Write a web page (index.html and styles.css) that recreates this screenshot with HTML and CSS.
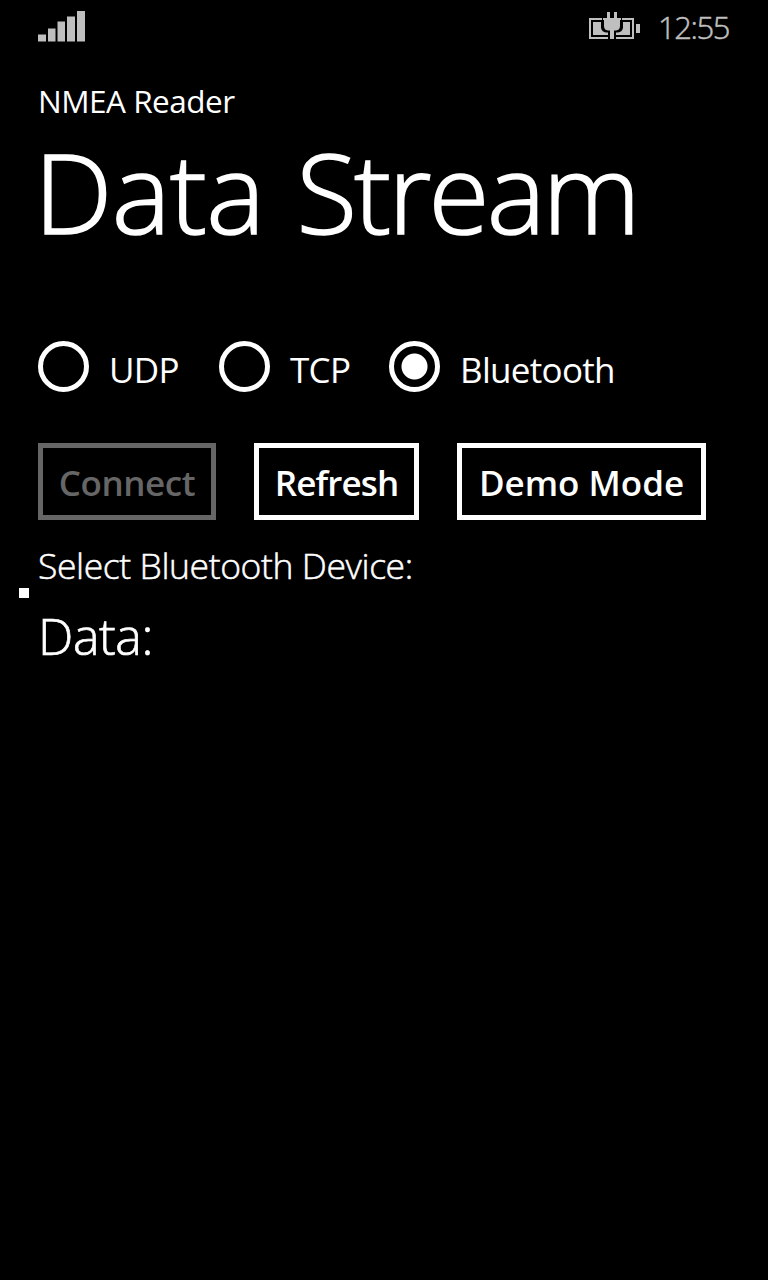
FILE: index.html
```html
<!DOCTYPE html>
<html lang="en">
<head>
<meta charset="utf-8">
<title>NMEA Reader</title>
<link rel="stylesheet" href="styles.css">
</head>
<body>
<header class="status">
  <svg class="signal" width="48" height="32" viewBox="0 0 48 32" fill="#bfbfbf"><path d="M0 23.500h8V30.500H0zM10 17.500h7.500v13H10zM19.500 10.500h7.500v20h-7.500zM29 5.500h8v25h-8zM39 0h8v30.500h-8z"/></svg>
  <svg class="battery" width="52" height="30" viewBox="0 0 52 30" fill="#bfbfbf"><path d="M1 6h13v2H3v17h17v2H1zM34 6h12v21H28v-2h16V8H34z"/><path d="M5 10h8v6q1 4 5 4.500h2V23H5zM42 10h-7v6q-1 4-5 4.500h-2V23h14z"/><path d="M19 0h3v6h4V0h3v6h4v2h-1v6q0 4-4 4.500h-2V27h-4v-8.500h-2q-4-.5-4-4.500V8h-1V6h4zM48 12h4v9h-4z"/></svg>
  <span class="clock">12:55</span>
</header>
<main class="page">
  <div class="app">NMEA Reader</div>
  <h1 class="title">Data <span class="second">Stream</span></h1>
  <div class="radios">
    <label class="radio"><span class="ring"></span><span class="udp">UDP</span></label>
    <label class="radio"><span class="ring"></span><span class="tcp">TCP</span></label>
    <label class="radio"><span class="ring on"></span><span class="bt">Bluetooth</span></label>
  </div>
  <div class="buttons">
    <button class="btn connect" disabled>Connect</button>
    <button class="btn refresh">Refresh</button>
    <button class="btn demo">Demo Mode</button>
  </div>
  <div class="select">Select Bluetooth Device:</div>
  <div class="marker"></div>
  <div class="data">Data:</div>
</main>
</body>
</html>
```
FILE: styles.css
```css
* { box-sizing: border-box; }
body { margin: 0; height: 1280px; background: #000; color: #fff; font-family: "Open Sans", "Noto Sans", sans-serif; overflow: hidden; white-space: nowrap; }
.status { display: flex; height: 53px; padding: 11px 39px 0 38px; color: #bfbfbf; }
.battery { margin: 1px 18px 0 auto; }
.clock { width: 71px; font-size: 31px; line-height: 33px; font-weight: 300; letter-spacing: -1.4px; -webkit-text-stroke: 0.5px; }
.page { padding: 30px 38px 0; }
.app { height: 38px; font-size: 31.500px; line-height: 36px; letter-spacing: -0.5px; }
.title { margin: 4px 0 0 -4px; height: 140px; font-size: 111px; line-height: 133px; font-weight: 300; letter-spacing: -0.7px; -webkit-text-stroke: 1.6px; }
.second { margin-left: 4px; letter-spacing: -2.9px; }
.radios { display: flex; margin-top: 76px; height: 52px; }
.radio { display: flex; align-items: flex-start; font-size: 35px; line-height: 57px; letter-spacing: -0.7px; }
.ring { width: 51px; height: 51px; border: 5px solid #fff; border-radius: 50%; margin-right: 20px; }
.ring.on { background: radial-gradient(circle, #fff 12.5px, transparent 13.5px); }
.udp { width: 110px; }
.tcp { width: 99px; }
.buttons { display: flex; margin-top: 50px; }
.btn { height: 77px; padding: 2px 0 0; background: none; border: 5px solid #fff; color: #fff; font: 600 35px "Open Sans", sans-serif; }
.connect { width: 178px; color: #666; border-color: #666; letter-spacing: -0.4px; }
.refresh { width: 165px; margin-left: 38px; letter-spacing: -0.9px; }
.demo { width: 249px; margin-left: 38px; }
.select { margin-top: 22px; height: 46px; line-height: 46px; font-size: 35.500px; font-weight: 300; letter-spacing: -0.4px; -webkit-text-stroke: 0.5px; }
.marker { width: 10px; height: 10px; margin-left: -19px; background: #fff; }
.data { height: 66px; line-height: 66px; margin: 5px 0 0; font-size: 50px; font-weight: 300; letter-spacing: -0.4px; -webkit-text-stroke: 0.7px; }
```
